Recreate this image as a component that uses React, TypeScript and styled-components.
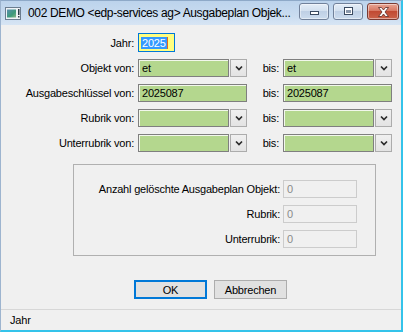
import styled, { createGlobalStyle } from "styled-components";

const GlobalStyle = createGlobalStyle`
  html, body {
    margin: 0;
    padding: 0;
    background: #ffffff;
  }
  body {
    width: 405px;
    height: 335px;
    overflow: hidden;
    font-family: "Liberation Sans", Arial, sans-serif;
  }
`;

const Window = styled.div`
  width: 400px;
  height: 329px;
  display: flex;
  flex-direction: column;
  border-top: 1px solid #8ea9c8;
  border-left: 1px solid #9db4cf;
  border-right: 2px solid #34c3ea;
  border-bottom: 2px solid #34c3ea;
  background: #f0f0f0;
`;

const TitleBar = styled.div`
  height: 24px;
  display: flex;
  align-items: center;
  padding: 0 2px 0 4px;
  background: linear-gradient(to bottom, #bcd3ec 0%, #c9dcf0 60%, #d7e5f4 100%);
`;

const TitleText = styled.div`
  margin-left: 7px;
  font-size: 12px;
  letter-spacing: -0.35px;
  color: #000;
  white-space: nowrap;
`;

const CaptionButtons = styled.div`
  display: flex;
  gap: 4px;
  margin: -3px 0 0 auto;
`;

const CaptionButton = styled.div<{ $close?: boolean }>`
  box-sizing: border-box;
  width: ${p => (p.$close ? 32 : 30)}px;
  height: 17px;
  display: flex;
  align-items: center;
  justify-content: center;
  border-radius: 3px;
  border: 1px solid ${p => (p.$close ? "#7a3b33" : "#71819a")};
  background: ${p =>
    p.$close
      ? "linear-gradient(to bottom, #e8a594 0%, #d77863 45%, #c14a33 50%, #cb6249 100%)"
      : "linear-gradient(to bottom, #e4edf7 0%, #d3e0ef 45%, #bfd0e5 50%, #ccdcee 100%)"};
  box-shadow: inset 0 0 0 1px rgba(255, 255, 255, 0.45);
`;

const Client = styled.div`
  flex: 1;
  display: flex;
  flex-direction: column;
`;

const FormGrid = styled.div`
  display: grid;
  grid-template-columns: 137px 109px 36px 109px;
  grid-auto-rows: 18px;
  row-gap: 7px;
  padding-top: 9px;
`;

const Label = styled.div<{ $gap?: number }>`
  display: flex;
  align-items: center;
  justify-content: flex-end;
  padding-right: ${p => p.$gap ?? 4}px;
  font-size: 11px;
  letter-spacing: -0.2px;
  color: #000;
  white-space: nowrap;
`;

const Field = styled.div<{ $disabled?: boolean }>`
  box-sizing: border-box;
  height: 18px;
  flex: 1;
  display: flex;
  align-items: center;
  padding-left: 3px;
  font-size: 11px;
  letter-spacing: -0.2px;
  border: 1px solid ${p => (p.$disabled ? "#cccccc" : "#7f7f7f")};
  background: ${p => (p.$disabled ? "#f0f0f0" : "#b4d78e")};
  color: ${p => (p.$disabled ? "#8a8a8a" : "#000")};
  box-shadow: ${p => (p.$disabled ? "none" : "inset 1px 1px 0 #f2f7ec")};
`;

const JahrField = styled.div`
  box-sizing: border-box;
  width: 37px;
  height: 19px;
  margin-top: -1px;
  display: flex;
  align-items: center;
  padding-left: 2px;
  font-size: 11px;
  letter-spacing: -0.2px;
  border: 1px solid #0078d7;
  background: #ffff80;
`;

const Selection = styled.span`
  background: #3399ff;
  color: #ffffff;
  line-height: 12px;
  padding: 0 1px;
  border-right: 1px solid #e06a20;
`;

const Combo = styled.div`
  display: flex;
  gap: 1px;
`;

const DropButton = styled.div`
  box-sizing: border-box;
  width: 17px;
  height: 18px;
  display: flex;
  align-items: center;
  justify-content: center;
  border: 1px solid #acacac;
  background: linear-gradient(to bottom, #f0f0f0, #e3e3e3);
`;

const GroupBox = styled.div`
  box-sizing: border-box;
  margin: 12px 0 0 72px;
  width: 303px;
  height: 92px;
  border: 1px solid #b0b0b0;
  padding-top: 15px;
`;

const GroupGrid = styled.div`
  display: grid;
  grid-template-columns: 209px 74px;
  grid-auto-rows: 18px;
  row-gap: 7px;
`;

const ButtonRow = styled.div`
  display: flex;
  gap: 7px;
  margin-top: 24px;
  padding-left: 133px;
`;

const PushButton = styled.div<{ $default?: boolean }>`
  box-sizing: border-box;
  width: 73px;
  height: 19px;
  display: flex;
  align-items: center;
  justify-content: center;
  font-size: 11px;
  letter-spacing: -0.2px;
  color: #000;
  background: #e1e1e1;
  border: 1px solid ${p => (p.$default ? "#0078d7" : "#adadad")};
  box-shadow: ${p => (p.$default ? "inset 0 0 0 1px #0078d7" : "none")};
`;

const StatusBar = styled.div`
  margin-top: 10px;
  flex: 1;
  display: flex;
  align-items: center;
  padding-left: 9px;
  border-top: 1px solid #d7d7d7;
  font-size: 11px;
  letter-spacing: -0.2px;
  color: #000;
`;

const Chevron = () => (
  <svg width="8" height="6" viewBox="0 0 8 6">
    <polyline points="1,1.5 4,4.5 7,1.5" fill="none" stroke="#2b2b2b" strokeWidth="1.7" />
  </svg>
);

const AppIcon = () => (
  <svg width="16" height="13" viewBox="0 0 16 13">
    <defs>
      <linearGradient id="ic" x1="0" y1="0" x2="1" y2="1">
        <stop offset="0" stopColor="#5c8fb0" />
        <stop offset="0.6" stopColor="#3d9a7a" />
        <stop offset="1" stopColor="#8ab88a" />
      </linearGradient>
    </defs>
    <rect x="0.5" y="0.5" width="15" height="12" fill="#eef2f6" stroke="#6b7d8f" />
    <rect x="2" y="2.5" width="9" height="8" fill="url(#ic)" />
    <rect x="13" y="2" width="1.5" height="6" fill="#2d3b48" />
    <rect x="13" y="9" width="1.5" height="1.5" fill="#2d3b48" />
  </svg>
);

const MinIcon = () => (
  <svg width="11" height="8" viewBox="0 0 11 8">
    <rect x="1.5" y="3.5" width="8" height="3" fill="#ffffff" stroke="#3a4a60" />
  </svg>
);

const MaxIcon = () => (
  <svg width="11" height="9" viewBox="0 0 11 9">
    <rect x="1.5" y="0.5" width="8" height="7" fill="#ffffff" stroke="#3a4a60" />
    <rect x="3" y="3" width="5" height="3" fill="#8a98ab" />
  </svg>
);

const CloseIcon = () => (
  <svg width="13" height="10" viewBox="0 0 13 10">
    <path
      d="M1.5 0.5 L4.5 0.5 L6.5 3 L8.5 0.5 L11.5 0.5 L8 5 L11.5 9.5 L8.5 9.5 L6.5 7 L4.5 9.5 L1.5 9.5 L5 5 Z"
      fill="#ffffff"
      stroke="#5a2a25"
      strokeWidth="0.8"
      strokeLinejoin="round"
    />
  </svg>
);

type ComboProps = { value?: string };

const ComboBox = ({ value }: ComboProps) => (
  <Combo>
    <Field>{value}</Field>
    <DropButton>
      <Chevron />
    </DropButton>
  </Combo>
);

const App = () => {
  return (
    <>
      <GlobalStyle />
      <Window>
        <TitleBar>
          <AppIcon />
          <TitleText>002 DEMO &lt;edp-services ag&gt; Ausgabeplan Objek...</TitleText>
          <CaptionButtons>
            <CaptionButton>
              <MinIcon />
            </CaptionButton>
            <CaptionButton>
              <MaxIcon />
            </CaptionButton>
            <CaptionButton $close>
              <CloseIcon />
            </CaptionButton>
          </CaptionButtons>
        </TitleBar>
        <Client>
          <FormGrid>
            <Label>Jahr:</Label>
            <JahrField>
              <Selection>2025</Selection>
            </JahrField>
            <div />
            <div />

            <Label>Objekt von:</Label>
            <ComboBox value="et" />
            <Label>bis:</Label>
            <ComboBox value="et" />

            <Label>Ausgabeschlüssel von:</Label>
            <Field>2025087</Field>
            <Label>bis:</Label>
            <Field>2025087</Field>

            <Label>Rubrik von:</Label>
            <ComboBox />
            <Label>bis:</Label>
            <ComboBox />

            <Label>Unterrubrik von:</Label>
            <ComboBox />
            <Label>bis:</Label>
            <ComboBox />
          </FormGrid>

          <GroupBox>
            <GroupGrid>
              <Label $gap={3}>Anzahl gelöschte Ausgabeplan Objekt:</Label>
              <Field $disabled>0</Field>
              <Label $gap={3}>Rubrik:</Label>
              <Field $disabled>0</Field>
              <Label $gap={3}>Unterrubrik:</Label>
              <Field $disabled>0</Field>
            </GroupGrid>
          </GroupBox>

          <ButtonRow>
            <PushButton $default>OK</PushButton>
            <PushButton>Abbrechen</PushButton>
          </ButtonRow>

          <StatusBar>Jahr</StatusBar>
        </Client>
      </Window>
    </>
  );
};

export default App;
